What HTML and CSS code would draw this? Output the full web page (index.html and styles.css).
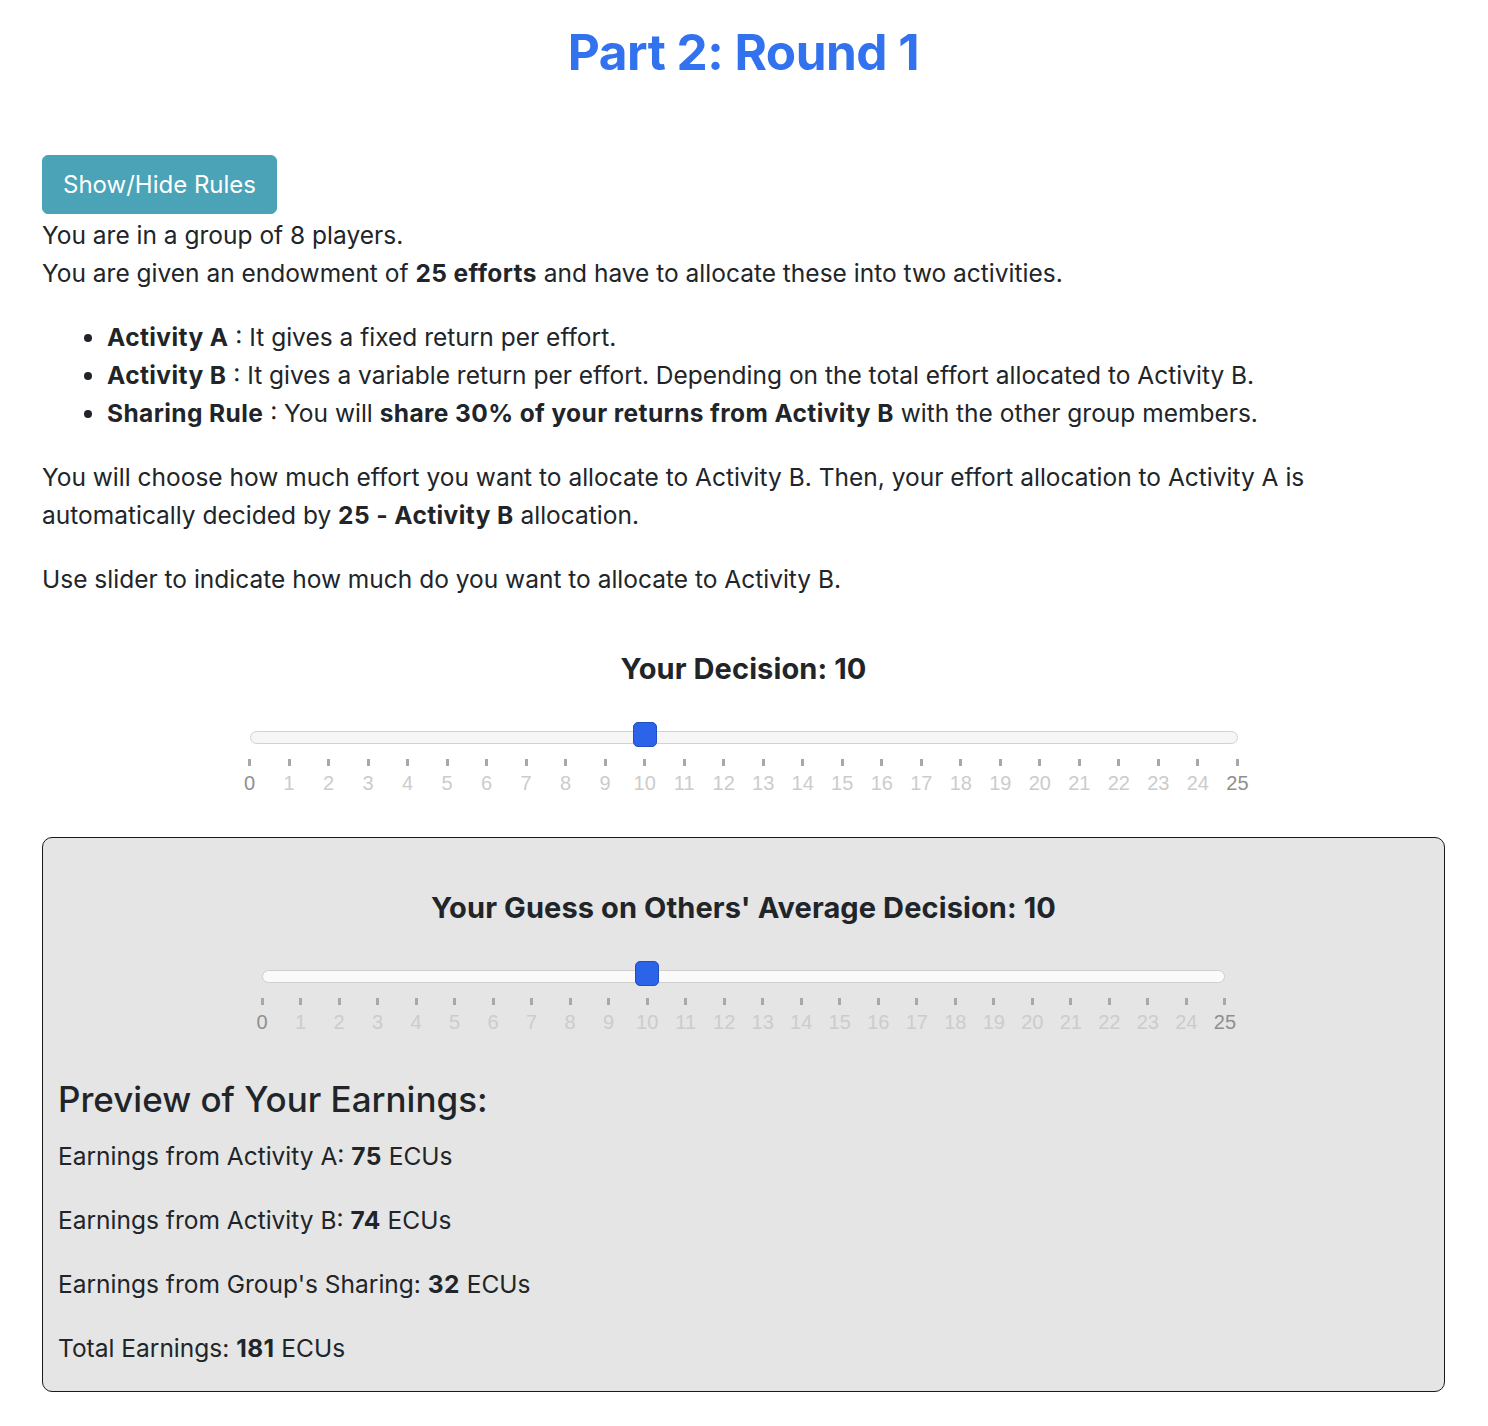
FILE: index.html
```html
<!DOCTYPE html>
<html lang="en">
<head>
<meta charset="utf-8">
<title>Part 2: Round 1</title>
<link rel="stylesheet" href="styles.css">
</head>
<body>
<div class="page">
  <h1 class="title">Part 2: Round 1</h1>
  <button class="btn-rules" type="button">Show/Hide Rules</button>
  <p class="txt">You are in a group of 8 players.<br>You are given an endowment of <b>25 efforts</b> and have to allocate these into two activities.</p>
  <ul class="rules">
    <li><b>Activity A</b> : It gives a fixed return per effort.</li>
    <li><b>Activity B</b> : It gives a variable return per effort. Depending on the total effort allocated to Activity B.</li>
    <li><b>Sharing Rule</b> : You will <b>share 30% of your returns from Activity B</b> with the other group members.</li>
  </ul>
  <p class="txt">You will choose how much effort you want to allocate to Activity B. Then, your effort allocation to Activity A is automatically decided by <b>25 - Activity B</b> allocation.</p>
  <p class="txt">Use slider to indicate how much do you want to allocate to Activity B.</p>

  <section class="decision">
    <h5 class="dec-title">Your Decision: 10</h5>
    <div class="slider slider-main">
      <div class="track"></div>
      <div class="handle" style="left: 40%"></div>
      <div class="grid">
        <span class="tick end"><i></i>0</span><span class="tick"><i></i>1</span><span class="tick"><i></i>2</span><span class="tick"><i></i>3</span><span class="tick"><i></i>4</span><span class="tick"><i></i>5</span><span class="tick"><i></i>6</span><span class="tick"><i></i>7</span><span class="tick"><i></i>8</span><span class="tick"><i></i>9</span><span class="tick"><i></i>10</span><span class="tick"><i></i>11</span><span class="tick"><i></i>12</span><span class="tick"><i></i>13</span><span class="tick"><i></i>14</span><span class="tick"><i></i>15</span><span class="tick"><i></i>16</span><span class="tick"><i></i>17</span><span class="tick"><i></i>18</span><span class="tick"><i></i>19</span><span class="tick"><i></i>20</span><span class="tick"><i></i>21</span><span class="tick"><i></i>22</span><span class="tick"><i></i>23</span><span class="tick"><i></i>24</span><span class="tick end"><i></i>25</span>
      </div>
    </div>
  </section>

  <section class="guess-box">
    <h5 class="dec-title guess-title">Your Guess on Others' Average Decision: 10</h5>
    <div class="slider slider-guess">
      <div class="track"></div>
      <div class="handle" style="left: 40%"></div>
      <div class="grid">
        <span class="tick end"><i></i>0</span><span class="tick"><i></i>1</span><span class="tick"><i></i>2</span><span class="tick"><i></i>3</span><span class="tick"><i></i>4</span><span class="tick"><i></i>5</span><span class="tick"><i></i>6</span><span class="tick"><i></i>7</span><span class="tick"><i></i>8</span><span class="tick"><i></i>9</span><span class="tick"><i></i>10</span><span class="tick"><i></i>11</span><span class="tick"><i></i>12</span><span class="tick"><i></i>13</span><span class="tick"><i></i>14</span><span class="tick"><i></i>15</span><span class="tick"><i></i>16</span><span class="tick"><i></i>17</span><span class="tick"><i></i>18</span><span class="tick"><i></i>19</span><span class="tick"><i></i>20</span><span class="tick"><i></i>21</span><span class="tick"><i></i>22</span><span class="tick"><i></i>23</span><span class="tick"><i></i>24</span><span class="tick end"><i></i>25</span>
      </div>
    </div>
    <h3 class="preview-title">Preview of Your Earnings:</h3>
    <p class="txt">Earnings from Activity A: <b>75</b> ECUs</p>
    <p class="txt">Earnings from Activity B: <b>74</b> ECUs</p>
    <p class="txt">Earnings from Group's Sharing: <b>32</b> ECUs</p>
    <p class="txt last">Total Earnings: <b>181</b> ECUs</p>
  </section>
</div>
</body>
</html>
```
FILE: styles.css
```css
html, body {
  margin: 0;
  padding: 0;
  background: #ffffff;
}
body {
  font-family: Inter, "Noto Sans", "Liberation Sans", sans-serif;
  font-size: 24.5px;
  line-height: 38px;
  color: #212529;
}
.page {
  padding: 0 43px 0 42px;
}
.title {
  margin: 21px 0 0;
  text-align: center;
  font-size: 49.5px;
  line-height: 62px;
  font-weight: 700;
  color: #3272ee;
  letter-spacing: -0.5px;
}
.btn-rules {
  display: block;
  margin: 72px 0 0;
  height: 59px;
  padding: 0 20px;
  border: 1px solid #4aa3b6;
  border-radius: 6px;
  background: #4aa3b6;
  color: #ffffff;
  font-family: inherit;
  font-size: 24px;
  line-height: 57px;
}
.txt {
  margin: 0 0 26px;
}
.page > .txt:first-of-type {
  margin-top: 2px;
}
.rules {
  margin: 0 0 26px;
  padding-left: 65px;
}
b {
  font-weight: 700;
  letter-spacing: 0.4px;
}
.decision {
  display: flex;
  flex-direction: column;
  align-items: center;
}
.dec-title {
  margin: 28px 0 0;
  font-size: 29px;
  line-height: 34px;
  font-weight: 700;
  letter-spacing: 0.1px;
}
.slider {
  position: relative;
  padding-top: 9px;
}
.slider-main {
  width: 988px;
  margin-top: 36px;
}
.slider-guess {
  width: 963px;
  margin: 36px auto 0;
}
.track {
  height: 11px;
  border: 1px solid #d2d2d2;
  border-radius: 7px;
  background: #f6f6f6;
}
.guess-box .track {
  background: #fafafa;
  border-color: #cfcfcf;
}
.handle {
  position: absolute;
  top: 0;
  width: 22px;
  height: 23px;
  margin-left: -12px;
  border: 1px solid #1f4fc4;
  border-radius: 5px;
  background: #2b63e9;
}
.grid {
  display: flex;
  justify-content: space-between;
  margin-top: 15px;
  height: 38px;
}
.tick {
  width: 0;
  display: flex;
  flex-direction: column;
  align-items: center;
  font-family: "Liberation Sans", Arial, sans-serif;
  font-size: 20px;
  line-height: 24px;
  color: #cccccc;
  white-space: nowrap;
}
.tick i {
  display: block;
  width: 3px;
  height: 7px;
  margin-bottom: 5px;
  background: #a8a8a8;
}
.tick.end {
  color: #8f8f8f;
}
.guess-box {
  margin-top: 40px;
  margin-bottom: 34px;
  padding: 0 15px;
  border: 1px solid #1a1a1a;
  border-radius: 10px;
  background: #e5e5e5;
}
.guess-title {
  margin-top: 53px;
  text-align: center;
}
.preview-title {
  margin: 41px 0 0;
  font-size: 35px;
  line-height: 44px;
  font-weight: 500;
}
.preview-title + .txt {
  margin-top: 16px;
}
.guess-box .txt.last {
  margin-bottom: 24px;
}
```
